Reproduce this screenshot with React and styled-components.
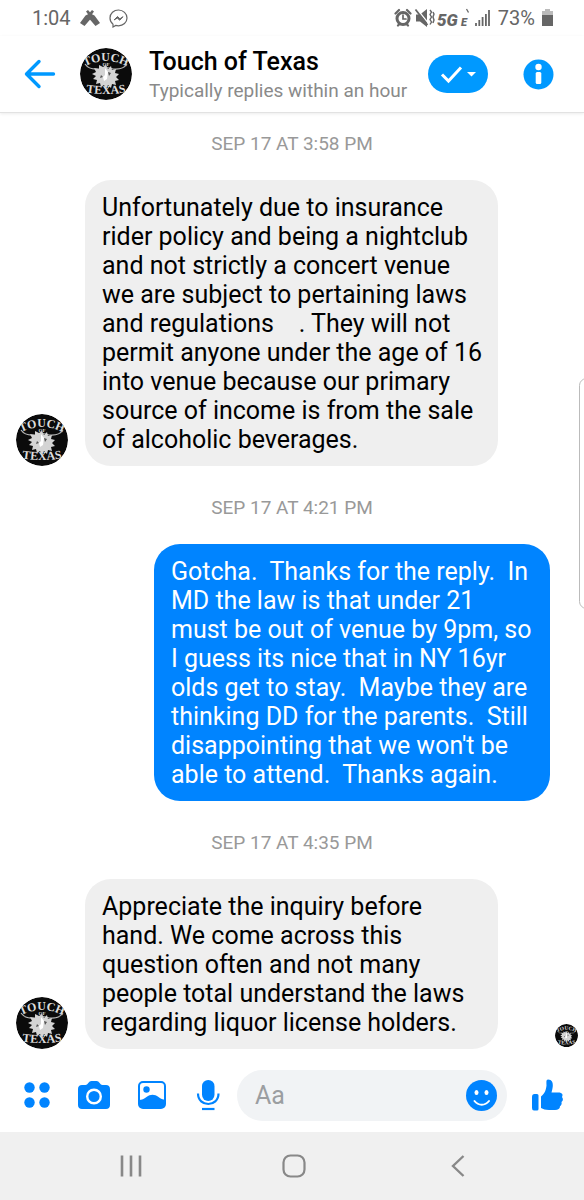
import React from "react";
import styled, { createGlobalStyle } from "styled-components";

const GlobalStyle = createGlobalStyle`
  * {
    box-sizing: border-box;
  }

  body {
    margin: 0;
    background-color: #fff;
    font-family: Roboto, "Liberation Sans", sans-serif;
  }

  button,
  input {
    font-family: inherit;
  }
`;

const Screen = styled.div`
  min-height: 100vh;
  display: flex;
  flex-direction: column;
  background-color: #fff;
`;

const StatusBar = styled.div`
  height: 36px;
  padding: 0 30px 0 32px;
  display: flex;
  align-items: center;
  justify-content: space-between;
  color: #666;
  font-size: 20px;
  line-height: 24px;
`;

const StatusGroup = styled.div`
  display: flex;
  align-items: center;
  gap: ${(props) => props.$gap}px;

  svg {
    display: block;
  }
`;

const Header = styled.header`
  height: 77px;
  padding: 0 30px 0 24px;
  display: flex;
  align-items: center;
  border-bottom: 1px solid #e2e2e2;
  box-shadow: 0 1px 3px rgba(0, 0, 0, 0.08);
`;

const IconButton = styled.button`
  padding: 0;
  border: none;
  background: none;
  display: flex;
  align-items: center;
  justify-content: center;
  flex-shrink: 0;
  color: ${(props) => props.$color || "#0084ff"};
  cursor: pointer;
`;

const AvatarSvg = styled.svg`
  display: block;
  flex-shrink: 0;
  border-radius: 50%;
`;

const HeaderAvatar = styled.div`
  margin: 0 17px 0 24px;
`;

const Contact = styled.div`
  flex: 1;
  min-width: 0;
  padding-top: 4px;
`;

const ContactName = styled.h1`
  margin: 0;
  font-size: 25px;
  line-height: 29px;
  font-weight: 500;
  color: #000;
`;

const ContactNote = styled.p`
  margin: 0;
  font-size: 19px;
  line-height: 29px;
  white-space: nowrap;
  color: #8a8a8a;
`;

const DoneButton = styled.button`
  width: 60px;
  height: 38px;
  margin-right: 35px;
  padding: 0;
  border: none;
  border-radius: 19px;
  background-color: #0099ff;
  display: flex;
  align-items: center;
  justify-content: center;
  cursor: pointer;
`;

const Thread = styled.main`
  flex: 1;
  padding: 0 6px 0 16px;
  display: flex;
  flex-direction: column;
`;

const DateStamp = styled.time`
  display: block;
  padding: ${(props) => (props.$first ? 19 : 30)}px 10px 24px 0;
  text-align: center;
  font-size: 19px;
  line-height: 24px;
  color: #999;
`;

const MessageRow = styled.div`
  display: flex;
  align-items: flex-end;
  gap: 17px;
  justify-content: ${(props) => (props.$sent ? "flex-end" : "flex-start")};
  padding-right: ${(props) => (props.$sent ? 28 : 0)}px;
`;

const Bubble = styled.p`
  margin: 0;
  max-width: ${(props) => (props.$sent ? 396 : 413)}px;
  padding: 13px 14px 12px 17px;
  border-radius: 26px;
  background-color: ${(props) => (props.$sent ? "#0084ff" : "#efefef")};
  color: ${(props) => (props.$sent ? "#fff" : "#000")};
  font-size: 25px;
  line-height: 29px;
  white-space: pre-wrap;
`;

const Seen = styled.div`
  margin-left: auto;
  padding-bottom: 2px;
`;

const Composer = styled.form`
  height: 82px;
  padding: 8px 20px 0 24px;
  display: flex;
  align-items: center;
`;

const ComposerActions = styled.div`
  display: flex;
  align-items: center;
  gap: 28px;
  margin-right: 15px;
`;

const InputWrap = styled.div`
  flex: 1;
  min-width: 0;
  height: 51px;
  margin-right: 24px;
  padding: 0 10px 0 18px;
  border-radius: 26px;
  background-color: #f1f3f5;
  display: flex;
  align-items: center;
`;

const TextInput = styled.input`
  flex: 1;
  min-width: 0;
  padding: 0;
  border: none;
  outline: none;
  background: none;
  font-size: 25px;
  line-height: 29px;
  color: #000;

  &::placeholder {
    color: #9b9ea1;
    opacity: 1;
  }
`;

const NavBar = styled.nav`
  height: 68px;
  padding: 0 44px 0 49px;
  display: grid;
  grid-template-columns: repeat(3, 1fr);
  background-color: #f0f0f0;
`;

// Edge panel tab, hangs over the right side of the thread
const EdgeHandle = styled.div`
  position: fixed;
  top: 378px;
  right: -10px;
  width: 15px;
  height: 231px;
  border: 1px solid #bbb;
  border-radius: 8px;
  background-color: #fff;
`;

function Avatar({ id, size }) {
  return (
    <AvatarSvg width={size} height={size} viewBox="0 0 52 52" role="img" aria-label="Touch of Texas">
      <defs>
        <path id={`${id}-top`} d="M4 19 Q26 7 48 19" />
        <path id={`${id}-bottom`} d="M3 44 Q26 48 49 44" />
      </defs>
      <circle cx="26" cy="26" r="26" fill="#0b0b0b" />
      <g fill="#ddd" fontFamily="Liberation Serif, serif" fontWeight="700">
        <text fontSize="12">
          <textPath href={`#${id}-top`} startOffset="50%" textAnchor="middle">TOUCH</textPath>
        </text>
        <text x="26" y="18" fontSize="5" textAnchor="middle">OF</text>
        <text fontSize="12">
          <textPath href={`#${id}-bottom`} startOffset="50%" textAnchor="middle">TEXAS</textPath>
        </text>
      </g>
      <path d="M5 16 Q9 22 19 21 Q26 18 33 21 Q43 22 47 16" fill="none" stroke="#bbb" strokeWidth="1.2" />
      <path
        d="M26 17l2 4 3-3 1 4 4-1-1 4 4 1-3 3 3 3-4 1 1 4-4-1-1 4-3-3-2 4-2-4-3 2-1-4-4 1 1-4-4-1 3-3-4-2 4-2-2-4 5 1 0-4 4 2z"
        fill="#d4d4d4"
      />
      <path d="M25 20l3 4-1 7-3 2-1-4 2-2z" fill="#fff" />
      <path d="M28 24l3 1-2 3zM21 27l2 2-3 1z" fill="#555" />
    </AvatarSvg>
  );
}

function StatusIcons() {
  return (
    <StatusGroup $gap={4}>
      <svg width="77" height="22" viewBox="0 0 77 22">
        {/* alarm */}
        <g fill="none" stroke="#666" strokeLinecap="round">
          <circle cx="9" cy="11.500" r="6" strokeWidth="3" />
          <path d="M9 8v4h3" strokeWidth="1.700" />
          <path d="M1.500 6.500 5 3M16.500 6.500 13 3M4 18.500l1.500-1.500M14 18.500 12.500 17" strokeWidth="2.200" />
        </g>
        {/* muted speaker */}
        <path d="M22 7.500h4l7-5.500v18l-7-5.500h-4z" fill="#666" />
        <path d="M22.500 1.500 35 17" stroke="#fff" strokeWidth="1.200" />
        <path d="M21.500 2.500 33.500 18" stroke="#666" strokeWidth="1.800" />
        <path d="M36 3l1.500 2-1.500 2.500 1.500 2.500-1.500 2.500 1.500 2.500-1.500 2.500M39 5l1 2-1 3 1 3-1 3" fill="none" stroke="#666" strokeWidth="1.400" />
        <text x="43" y="19" fontSize="17" fontWeight="900" fontStyle="italic" fill="#666">5G</text>
        <text x="67" y="19" fontSize="11" fontWeight="900" fontStyle="italic" fill="#666">E</text>
        <path d="M72.500 2l2 3.500" stroke="#666" strokeWidth="1.300" />
      </svg>
      <svg width="15" height="16" viewBox="0 0 15 16">
        <path d="M1 13v3M4.300 10v6M7.600 7v9M10.900 4v12M14 0v16" stroke="#666" strokeWidth="1.800" />
      </svg>
    </StatusGroup>
  );
}

export default function App() {
  return (
    <Screen>
      <GlobalStyle />
      <StatusBar>
        <StatusGroup $gap={9}>
          <span>1:04</span>
          <svg width="20" height="16" viewBox="0 0 20 16">
            <path d="M6 1.500 8 0l3.500 4 3 1.500L20 13l-4.500 3L9 8.500 8.500 5z" fill="#666" />
            <path d="M14 1.500 12 0 8.500 4l-3 1.500L0 13l4.500 3L11 8.500l.5-3.500z" fill="#666" />
          </svg>
          <svg width="19" height="19" viewBox="0 0 19 19" fill="none" stroke="#666">
            <path d="M9.500 1C4.800 1 1 4.500 1 9c0 2.600 1.100 4.700 3 6.200V18l2.700-1.600c.9.300 1.800.4 2.800.4 4.700 0 8.500-3.400 8.500-7.800S14.200 1 9.500 1z" strokeWidth="1.200" />
            <path d="M5 11l3.500-3.500 2.400 2.300L14 7.700l-3.200 3.500-2.500-2.100z" fill="#666" strokeWidth="1" />
          </svg>
        </StatusGroup>
        <StatusGroup $gap={8}>
          <StatusIcons />
          <StatusGroup $gap={6}>
            <span>73%</span>
            <svg width="13" height="18" viewBox="0 0 13 18">
              <path d="M4 0h5v2h3v4H1V2h3z" fill="#bbb" />
              <path d="M1 6h11v11H1z" fill="#666" />
            </svg>
          </StatusGroup>
        </StatusGroup>
      </StatusBar>

      <Header>
        <IconButton aria-label="Back" $color="#0099ff">
          <svg width="32" height="30" viewBox="0 0 32 30" fill="none" stroke="currentColor" strokeWidth="3.400" strokeLinecap="round" strokeLinejoin="round">
            <path d="M29.500 15H3M15 2.500 2.500 15 15 27.500" />
          </svg>
        </IconButton>
        <HeaderAvatar>
          <Avatar id="header" size={52} />
        </HeaderAvatar>
        <Contact>
          <ContactName>Touch of Texas</ContactName>
          <ContactNote>Typically replies within an hour</ContactNote>
        </Contact>
        <DoneButton aria-label="Mark as done">
          <svg width="38" height="20" viewBox="0 0 38 20">
            <path d="M3 10.500l6.500 6.500L22 3.500" fill="none" stroke="#fff" strokeWidth="3" />
            <path d="M28 8h9l-4.500 4.500z" fill="#fff" />
          </svg>
        </DoneButton>
        <IconButton aria-label="Information">
          <svg width="31" height="31" viewBox="0 0 31 31">
            <circle cx="15.500" cy="15.500" r="15" fill="#0099ff" />
            <circle cx="15.500" cy="8" r="3.200" fill="#fff" />
            <rect x="12.700" y="13" width="5.600" height="12" rx="1.500" fill="#fff" />
          </svg>
        </IconButton>
      </Header>

      <Thread>
        <DateStamp $first>SEP 17 AT 3:58 PM</DateStamp>
        <MessageRow>
          <Avatar id="first" size={52} />
          <Bubble>
            {"Unfortunately due to insurance rider policy and being a nightclub and not strictly a concert venue we are subject to pertaining laws and regulations    . They will not permit anyone under the age of 16 into venue because our primary source of income is from the sale of alcoholic beverages."}
          </Bubble>
        </MessageRow>

        <DateStamp>SEP 17 AT 4:21 PM</DateStamp>
        <MessageRow $sent>
          <Bubble $sent>
            {"Gotcha.  Thanks for the reply.  In MD the law is that under 21 must be out of venue by 9pm, so I guess its nice that in NY 16yr olds get to stay.  Maybe they are thinking DD for the parents.  Still disappointing that we won't be able to attend.  Thanks again."}
          </Bubble>
        </MessageRow>

        <DateStamp>SEP 17 AT 4:35 PM</DateStamp>
        <MessageRow>
          <Avatar id="second" size={52} />
          <Bubble>
            Appreciate the inquiry before hand. We come across this question often and not many people total understand the laws regarding liquor license holders.
          </Bubble>
          <Seen>
            <Avatar id="seen" size={23} />
          </Seen>
        </MessageRow>
      </Thread>

      <Composer onSubmit={(e) => e.preventDefault()}>
        <ComposerActions>
          <IconButton type="button" aria-label="More">
            <svg width="26" height="26" viewBox="0 0 26 26" fill="currentColor">
              <circle cx="5.500" cy="5.500" r="5.200" />
              <circle cx="20.500" cy="5.500" r="5.200" />
              <circle cx="5.500" cy="20.500" r="5.200" />
              <circle cx="20.500" cy="20.500" r="5.200" />
            </svg>
          </IconButton>
          <IconButton type="button" aria-label="Camera">
            <svg width="32" height="28" viewBox="0 0 32 28">
              <path d="M4 4h3.500C10.500 3.500 10.500 0 13.500 0h5c3 0 3 3.500 6 4H28c2.500 0 4 1.500 4 4v16c0 2.500-1.500 4-4 4H4c-2.500 0-4-1.500-4-4V8c0-2.500 1.500-4 4-4z" fill="currentColor" />
              <circle cx="16" cy="15.500" r="6.800" fill="none" stroke="#fff" strokeWidth="2.400" />
            </svg>
          </IconButton>
          <IconButton type="button" aria-label="Gallery">
            <svg width="28" height="28" viewBox="0 0 28 28">
              <rect x="1" y="1" width="26" height="26" rx="4" fill="none" stroke="currentColor" strokeWidth="2" />
              <circle cx="8.500" cy="8.500" r="3.200" fill="currentColor" />
              <path d="M1 19c3 0 5-1 7.500-3 4-3 8-3 12 0 2.500 2 4 2.500 6.500 2.500V24q0 3-3 3H4q-3 0-3-3z" fill="currentColor" />
            </svg>
          </IconButton>
          <IconButton type="button" aria-label="Voice message">
            <svg width="28" height="32" viewBox="2 0 28 32">
              <rect x="10" y="1" width="12.500" height="21" rx="6.200" fill="currentColor" />
              <path d="M6 14.500c0 14 20.500 14 20.500 0" fill="none" stroke="currentColor" strokeWidth="2.200" />
              <path d="M10 30h12.500" stroke="currentColor" strokeWidth="2.200" />
            </svg>
          </IconButton>
        </ComposerActions>
        <InputWrap>
          <TextInput type="text" aria-label="Message" placeholder="Aa" />
          <IconButton type="button" aria-label="Emoji">
            <svg width="31" height="31" viewBox="0 0 31 31">
              <circle cx="15.500" cy="15.500" r="15.500" fill="currentColor" />
              <ellipse cx="10.500" cy="12.500" rx="2" ry="2.600" fill="#fff" />
              <ellipse cx="20.500" cy="12.500" rx="2" ry="2.600" fill="#fff" />
              <path d="M8.500 21c4 5 10.500 5 14.500 0" fill="none" stroke="#fff" strokeWidth="2" strokeLinecap="round" />
            </svg>
          </IconButton>
        </InputWrap>
        <IconButton type="button" aria-label="Like">
          <svg width="33" height="32" viewBox="0 0 33 32" fill="currentColor">
            <path d="M3.500 15H6q1.500 0 1.500 1.500v13.500q0 1.500-1.500 1.500H3Q1 31.500 1 29V18q0-3 2.500-3z" />
            <path d="M10 17.500c4-3 5-7 5.500-11C15.500 2 15 1 17 .5c4 0 5 3 4.800 6.500-.2 2.500-.8 4.500-1.300 6.500H27c5 0 5 2.500 4 4.500 1.500 2 1 4-.5 5 .5 2-.2 3.500-1.500 4.300 0 2.700-2 3.700-5 3.700h-6c-4 0-5.500-1-8-2z" />
          </svg>
        </IconButton>
      </Composer>

      <NavBar>
        <IconButton aria-label="Recent apps" $color="#888">
          <svg width="22" height="22" viewBox="0 0 22 22" stroke="currentColor" strokeWidth="2.600">
            <path d="M2 0.500v21M11 .5v21M20 .5v21" />
          </svg>
        </IconButton>
        <IconButton aria-label="Home" $color="#888">
          <svg width="24" height="24" viewBox="0 0 24 24" fill="none" stroke="currentColor" strokeWidth="2.200">
            <rect x="1.500" y="1.500" width="21" height="21" rx="7" />
          </svg>
        </IconButton>
        <IconButton aria-label="Back to previous app" $color="#888">
          <svg width="14" height="22" viewBox="0 0 14 22" fill="none" stroke="currentColor" strokeWidth="2.400">
            <path d="M12.500 1 2 11l10.500 10" />
          </svg>
        </IconButton>
      </NavBar>
      <EdgeHandle />
    </Screen>
  );
}
